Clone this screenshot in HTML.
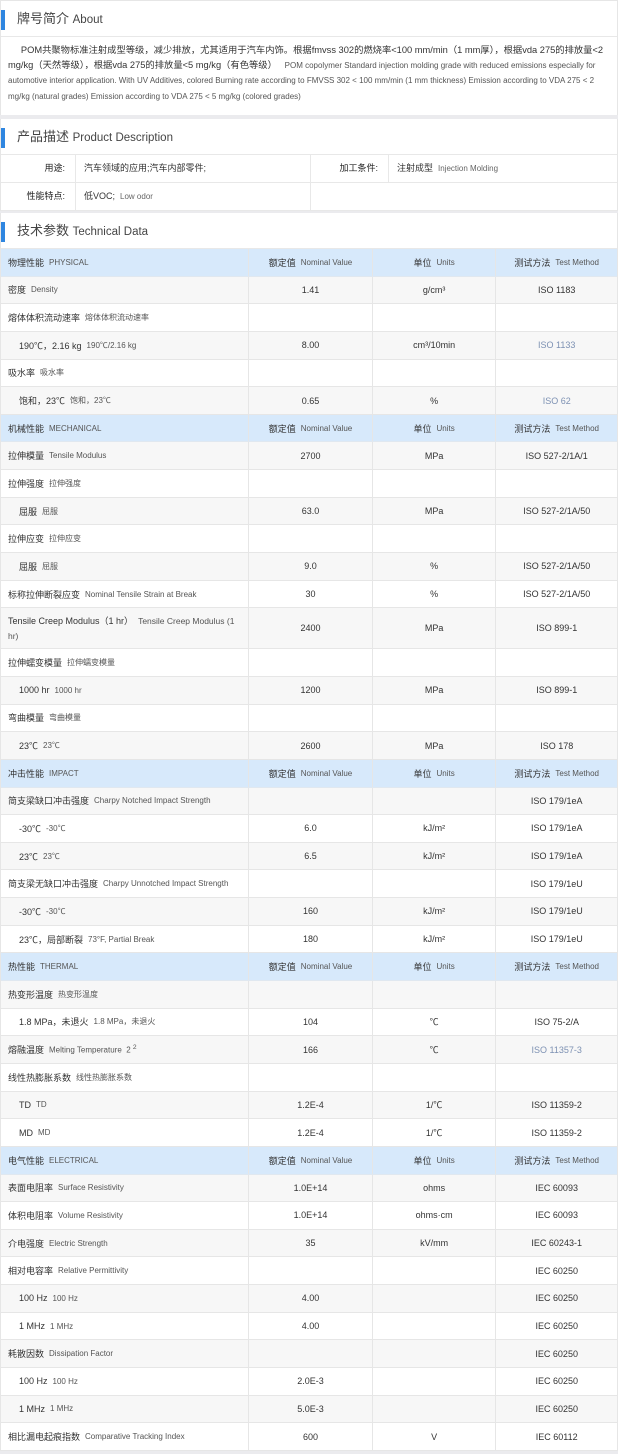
<!DOCTYPE html>
<html><head><meta charset="utf-8"><style>
*{margin:0;padding:0;box-sizing:border-box}
body{width:618px;height:1454px;background:#fff;font-family:"Liberation Sans","Noto Sans CJK SC",sans-serif;color:#333;overflow:hidden;position:relative}
.box{border-left:1px solid #e6e6e6;border-right:1px solid #e6e6e6}
.title{height:36px;position:relative;border-bottom:1px solid #e8e8e8;font-size:13px;color:#444;padding-left:16px;line-height:36px}
.title:before{content:"";position:absolute;left:0;top:9px;width:4px;height:20px;background:#2f86e0}
.title span{font-size:11.5px}
.band{height:4px;background:#ebebee}
.about{height:78px;padding:6px 6px 0 7px;font-size:9.3px;line-height:14.5px;color:#333}
.about .en{font-size:8px;color:#555}
.pd{display:flex;height:28px;border-bottom:1px solid #e8e8e8;font-size:9px;line-height:27px}
.pd div{border-right:1px solid #e8e8e8}
.lab{width:75px;text-align:right;padding-right:10px;color:#222}
.val{padding-left:8px}
.val small{font-size:8px;color:#666}
.row{display:flex;height:27.65px;border-bottom:1px solid #e6e6e6;font-size:9px;align-items:center}
.row.g{background:#f7f7f7}
.row.h{background:#d7e9fb;border-bottom:1px solid #e0e8f0}
.row>div{height:100%;display:flex;align-items:center;border-right:1px solid #e6e6e6}
.c1{width:249px;padding-left:7px}
.c2{width:124px;justify-content:center}
.c3{width:124px;justify-content:center}
.c4{width:121px;justify-content:center;border-right:none!important}
.row small{font-size:8px;color:#555;margin-left:5px}
.sub{padding-left:18px!important}
.bl{color:#7d91b3}
.row.tall{height:41px}
</style></head><body>
<div class="box" style="border-top:1px solid #e6e6e6">
<div class="title">牌号简介 <span>About</span></div>
<div class="about">&nbsp;&nbsp;&nbsp;&nbsp;&nbsp;POM共聚物标准注射成型等级，减少排放，尤其适用于汽车内饰。根据fmvss 302的燃烧率&lt;100 mm/min（1 mm厚），根据vda 275的排放量&lt;2 mg/kg（天然等级），根据vda 275的排放量&lt;5 mg/kg（有色等级） &nbsp;&nbsp;<span class="en">POM copolymer Standard injection molding grade with reduced emissions especially for automotive interior application. With UV Additives, colored Burning rate according to FMVSS 302 &lt; 100 mm/min (1 mm thickness) Emission according to VDA 275 &lt; 2 mg/kg (natural grades) Emission according to VDA 275 &lt; 5 mg/kg (colored grades)</span></div>
</div>
<div class="band"></div>
<div class="box">
<div class="title">产品描述 <span>Product Description</span></div>
<div class="pd"><div class="lab">用途:</div><div class="val" style="width:235px">汽车领域的应用;汽车内部零件;</div><div class="lab" style="width:78px">加工条件:</div><div class="val" style="border:none">注射成型 &nbsp;<small>Injection Molding</small></div></div>
<div class="pd"><div class="lab">性能特点:</div><div class="val" style="width:235px">低VOC; &nbsp;<small>Low odor</small></div></div>
</div>
<div class="band" style="height:2px"></div>
<div class="box">
<div class="title">技术参数 <span>Technical Data</span></div>
</div>
<div class="box" id="t" style="margin-top:0">
<div class="row h"><div class="c1">物理性能<small>PHYSICAL</small></div><div class="c2">额定值<small>Nominal Value</small></div><div class="c3">单位<small>Units</small></div><div class="c4">测试方法<small>Test Method</small></div></div>
<div class="row g"><div class="c1">密度<small>Density</small></div><div class="c2">1.41</div><div class="c3">g/cm³</div><div class="c4">ISO 1183</div></div>
<div class="row"><div class="c1">熔体体积流动速率<small>熔体体积流动速率</small></div><div class="c2"></div><div class="c3"></div><div class="c4"></div></div>
<div class="row g"><div class="c1 sub">190℃，2.16 kg<small>190℃/2.16 kg</small></div><div class="c2">8.00</div><div class="c3">cm³/10min</div><div class="c4 bl">ISO 1133</div></div>
<div class="row"><div class="c1">吸水率<small>吸水率</small></div><div class="c2"></div><div class="c3"></div><div class="c4"></div></div>
<div class="row g"><div class="c1 sub">饱和，23℃<small>饱和，23℃</small></div><div class="c2">0.65</div><div class="c3">%</div><div class="c4 bl">ISO 62</div></div>
<div class="row h"><div class="c1">机械性能<small>MECHANICAL</small></div><div class="c2">额定值<small>Nominal Value</small></div><div class="c3">单位<small>Units</small></div><div class="c4">测试方法<small>Test Method</small></div></div>
<div class="row g"><div class="c1">拉伸模量<small>Tensile Modulus</small></div><div class="c2">2700</div><div class="c3">MPa</div><div class="c4">ISO 527-2/1A/1</div></div>
<div class="row"><div class="c1">拉伸强度<small>拉伸强度</small></div><div class="c2"></div><div class="c3"></div><div class="c4"></div></div>
<div class="row g"><div class="c1 sub">屈服<small>屈服</small></div><div class="c2">63.0</div><div class="c3">MPa</div><div class="c4">ISO 527-2/1A/50</div></div>
<div class="row"><div class="c1">拉伸应变<small>拉伸应变</small></div><div class="c2"></div><div class="c3"></div><div class="c4"></div></div>
<div class="row g"><div class="c1 sub">屈服<small>屈服</small></div><div class="c2">9.0</div><div class="c3">%</div><div class="c4">ISO 527-2/1A/50</div></div>
<div class="row"><div class="c1">标称拉伸断裂应变<small>Nominal Tensile Strain at Break</small></div><div class="c2">30</div><div class="c3">%</div><div class="c4">ISO 527-2/1A/50</div></div>
<div class="row g tall"><div class="c1" style="display:block;padding-top:6px;line-height:15px;padding-right:8px">Tensile Creep Modulus（1 hr）<small style="font-size:8.5px">Tensile Creep Modulus (1 hr)</small></div><div class="c2">2400</div><div class="c3">MPa</div><div class="c4">ISO 899-1</div></div>
<div class="row"><div class="c1">拉伸蠕变模量<small>拉伸蠕变模量</small></div><div class="c2"></div><div class="c3"></div><div class="c4"></div></div>
<div class="row g"><div class="c1 sub">1000 hr<small>1000 hr</small></div><div class="c2">1200</div><div class="c3">MPa</div><div class="c4">ISO 899-1</div></div>
<div class="row"><div class="c1">弯曲模量<small>弯曲模量</small></div><div class="c2"></div><div class="c3"></div><div class="c4"></div></div>
<div class="row g"><div class="c1 sub">23℃<small>23℃</small></div><div class="c2">2600</div><div class="c3">MPa</div><div class="c4">ISO 178</div></div>
<div class="row h"><div class="c1">冲击性能<small>IMPACT</small></div><div class="c2">额定值<small>Nominal Value</small></div><div class="c3">单位<small>Units</small></div><div class="c4">测试方法<small>Test Method</small></div></div>
<div class="row g"><div class="c1">简支梁缺口冲击强度<small>Charpy Notched Impact Strength</small></div><div class="c2"></div><div class="c3"></div><div class="c4">ISO 179/1eA</div></div>
<div class="row"><div class="c1 sub">-30℃<small>-30℃</small></div><div class="c2">6.0</div><div class="c3">kJ/m²</div><div class="c4">ISO 179/1eA</div></div>
<div class="row g"><div class="c1 sub">23℃<small>23℃</small></div><div class="c2">6.5</div><div class="c3">kJ/m²</div><div class="c4">ISO 179/1eA</div></div>
<div class="row"><div class="c1">简支梁无缺口冲击强度<small>Charpy Unnotched Impact Strength</small></div><div class="c2"></div><div class="c3"></div><div class="c4">ISO 179/1eU</div></div>
<div class="row g"><div class="c1 sub">-30℃<small>-30℃</small></div><div class="c2">160</div><div class="c3">kJ/m²</div><div class="c4">ISO 179/1eU</div></div>
<div class="row"><div class="c1 sub">23℃，局部断裂<small>73°F, Partial Break</small></div><div class="c2">180</div><div class="c3">kJ/m²</div><div class="c4">ISO 179/1eU</div></div>
<div class="row h"><div class="c1">热性能<small>THERMAL</small></div><div class="c2">额定值<small>Nominal Value</small></div><div class="c3">单位<small>Units</small></div><div class="c4">测试方法<small>Test Method</small></div></div>
<div class="row g"><div class="c1">热变形温度<small>热变形温度</small></div><div class="c2"></div><div class="c3"></div><div class="c4"></div></div>
<div class="row"><div class="c1 sub">1.8 MPa，未退火<small>1.8 MPa，未退火</small></div><div class="c2">104</div><div class="c3">℃</div><div class="c4">ISO 75-2/A</div></div>
<div class="row g"><div class="c1">熔融温度<small>Melting Temperature &nbsp;2 <sup>2</sup></small></div><div class="c2">166</div><div class="c3">℃</div><div class="c4 bl">ISO 11357-3</div></div>
<div class="row"><div class="c1">线性热膨胀系数<small>线性热膨胀系数</small></div><div class="c2"></div><div class="c3"></div><div class="c4"></div></div>
<div class="row g"><div class="c1 sub">TD<small>TD</small></div><div class="c2">1.2E-4</div><div class="c3">1/℃</div><div class="c4">ISO 11359-2</div></div>
<div class="row"><div class="c1 sub">MD<small>MD</small></div><div class="c2">1.2E-4</div><div class="c3">1/℃</div><div class="c4">ISO 11359-2</div></div>
<div class="row h"><div class="c1">电气性能<small>ELECTRICAL</small></div><div class="c2">额定值<small>Nominal Value</small></div><div class="c3">单位<small>Units</small></div><div class="c4">测试方法<small>Test Method</small></div></div>
<div class="row g"><div class="c1">表面电阻率<small>Surface Resistivity</small></div><div class="c2">1.0E+14</div><div class="c3">ohms</div><div class="c4">IEC 60093</div></div>
<div class="row"><div class="c1">体积电阻率<small>Volume Resistivity</small></div><div class="c2">1.0E+14</div><div class="c3">ohms·cm</div><div class="c4">IEC 60093</div></div>
<div class="row g"><div class="c1">介电强度<small>Electric Strength</small></div><div class="c2">35</div><div class="c3">kV/mm</div><div class="c4">IEC 60243-1</div></div>
<div class="row"><div class="c1">相对电容率<small>Relative Permittivity</small></div><div class="c2"></div><div class="c3"></div><div class="c4">IEC 60250</div></div>
<div class="row g"><div class="c1 sub">100 Hz<small>100 Hz</small></div><div class="c2">4.00</div><div class="c3"></div><div class="c4">IEC 60250</div></div>
<div class="row"><div class="c1 sub">1 MHz<small>1 MHz</small></div><div class="c2">4.00</div><div class="c3"></div><div class="c4">IEC 60250</div></div>
<div class="row g"><div class="c1">耗散因数<small>Dissipation Factor</small></div><div class="c2"></div><div class="c3"></div><div class="c4">IEC 60250</div></div>
<div class="row"><div class="c1 sub">100 Hz<small>100 Hz</small></div><div class="c2">2.0E-3</div><div class="c3"></div><div class="c4">IEC 60250</div></div>
<div class="row g"><div class="c1 sub">1 MHz<small>1 MHz</small></div><div class="c2">5.0E-3</div><div class="c3"></div><div class="c4">IEC 60250</div></div>
<div class="row"><div class="c1">相比漏电起痕指数<small>Comparative Tracking Index</small></div><div class="c2">600</div><div class="c3">V</div><div class="c4">IEC 60112</div></div>
</div>
<div class="band" style="height:3px"></div>
</body></html>
